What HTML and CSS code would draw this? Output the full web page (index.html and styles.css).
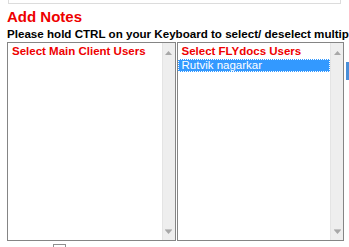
FILE: index.html
```html
<!DOCTYPE html>
<html>
<head>
<meta charset="utf-8">
<link rel="stylesheet" href="styles.css">
</head>
<body>
<div class="topbox"></div>
<h1 class="title">Add Notes</h1>
<p class="hint">Please hold CTRL on your Keyboard to select/ deselect multiple users</p>
<div class="lists">
  <div class="listbox left">
    <div class="options">
      <div class="opt head">Select Main Client Users</div>
    </div>
    <div class="sb">
      <svg class="arrow" width="7" height="4" viewBox="0 0 7 4"><polygon points="0,4 3.5,0 7,4" fill="#a8a8a8"/></svg>
      <svg class="arrow" width="7" height="5" viewBox="0 0 7 5"><rect x="0" y="0" width="7" height="1" fill="#c4c4c4"/><polygon points="0,1 7,1 3.5,5" fill="#a8a8a8"/></svg>
    </div>
  </div>
  <div class="listbox right">
    <div class="options">
      <div class="opt head">Select FLYdocs Users</div>
      <div class="opt sel">Rutvik nagarkar</div>
    </div>
    <div class="sb">
      <svg class="arrow" width="7" height="4" viewBox="0 0 7 4"><polygon points="0,4 3.5,0 7,4" fill="#a8a8a8"/></svg>
      <svg class="arrow" width="7" height="5" viewBox="0 0 7 5"><rect x="0" y="0" width="7" height="1" fill="#c4c4c4"/><polygon points="0,1 7,1 3.5,5" fill="#a8a8a8"/></svg>
    </div>
  </div>
  <div class="edge"></div>
</div>
<div class="footer"><span class="chk"></span></div>
</body>
</html>
```
FILE: styles.css
```css
html, body {
  margin: 0;
  padding: 0;
  width: 349px;
  height: 247px;
  overflow: hidden;
  background: #fff;
}
body {
  font-family: "Liberation Sans", Arial, sans-serif;
  color: #000;
}
.topbox {
  margin-left: 8px;
  width: 331px;
  height: 3px;
  border: 1px solid #dcdcdc;
  border-top: 0;
}
.title {
  margin: 4px 0 0 7px;
  font-size: 15px;
  line-height: 18px;
  font-weight: bold;
  color: #ee0000;
}
.hint {
  margin: 1px 0 0 7px;
  font-size: 11.6px;
  line-height: 13px;
  font-weight: bold;
  white-space: nowrap;
}
.lists {
  display: flex;
  gap: 1px;
  margin: 2px 0 0 7px;
  height: 199px;
}
.listbox {
  display: flex;
  box-sizing: border-box;
  height: 199px;
  border: 1px solid #858585;
}
.left { width: 169px; }
.right { width: 168px; }
.options {
  flex: 1;
  padding-top: 2px;
  min-width: 0;
}
.opt {
  font-size: 11.5px;
  line-height: 13px;
  height: 13px;
  padding-left: 4px;
  white-space: nowrap;
}
.head {
  height: 14px;
  color: #ee0000;
  font-weight: bold;
}
.sel {
  box-sizing: border-box;
  height: 13px;
  line-height: 11px;
  padding-left: 3px;
  background: #3399ff;
  color: #fff;
  border: 1px dotted #fff;
}
.sb {
  width: 13px;
  background: #eeeeee;
  border-left: 1px solid #e4e4e4;
  box-sizing: border-box;
  display: flex;
  flex-direction: column;
  justify-content: space-between;
  align-items: center;
  padding: 8px 0 6px;
}
.arrow { display: block; }
.edge {
  width: 3px;
  height: 18px;
  margin: 20px 0 0 1px;
  background: #4a8fd8;
}
.footer {
  display: flex;
  padding: 3px 0 0 53px;
}
.chk {
  display: block;
  width: 11px;
  height: 11px;
  border: 1px solid #8f8f8f;
  background: #fff;
}
```
